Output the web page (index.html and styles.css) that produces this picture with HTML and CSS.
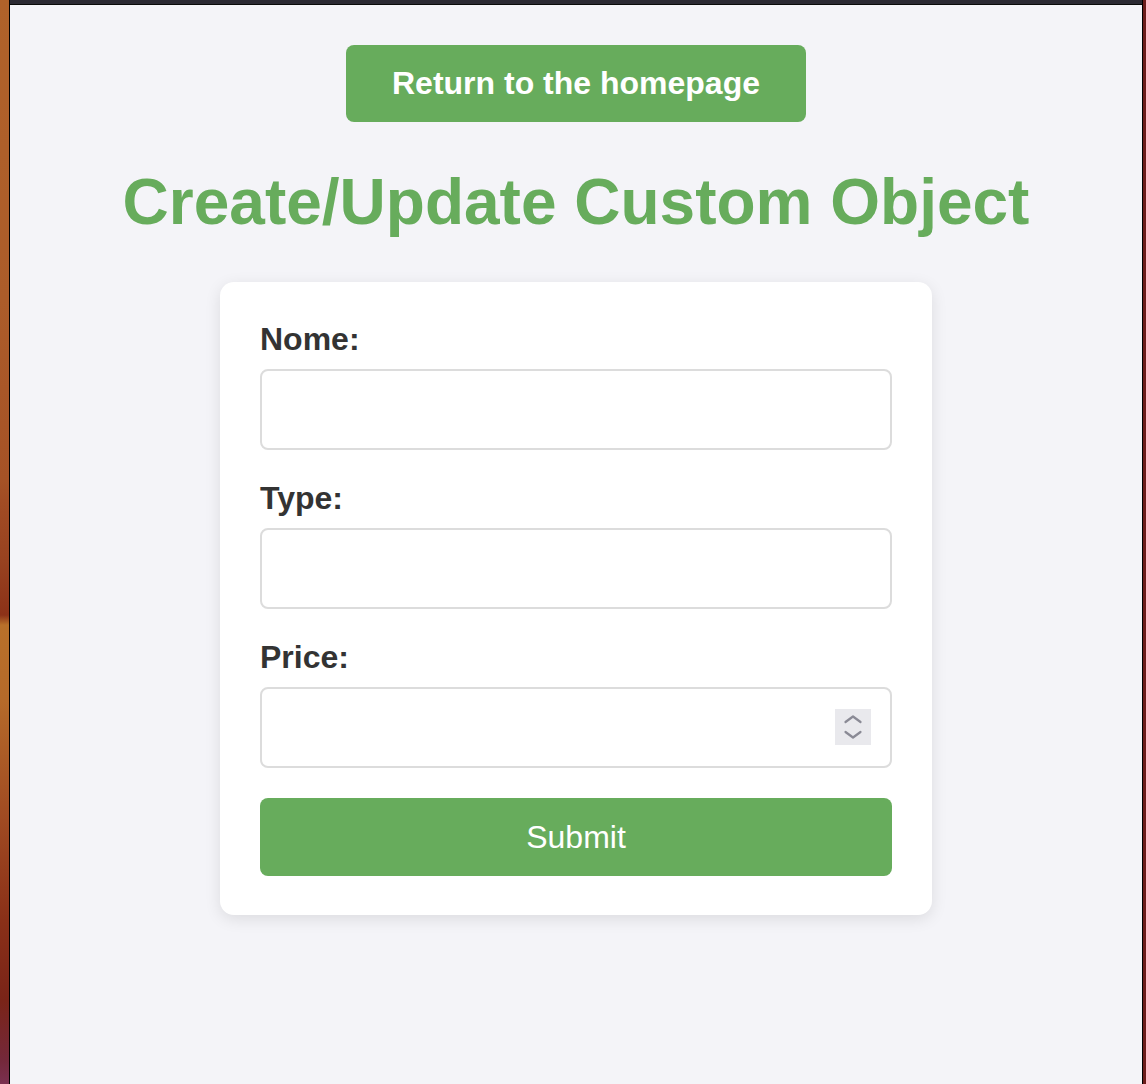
FILE: index.html
```html
<!DOCTYPE html>
<html lang="en">
<head>
<meta charset="utf-8">
<title>Create/Update Custom Object</title>
<link rel="stylesheet" href="styles.css">
</head>
<body>
<div class="desk-left"></div>
<div class="window">
  <div class="titlebar"></div>
  <main class="page">
    <a class="home-btn" href="#">Return to the homepage</a>
    <h1 class="title">Create/Update Custom Object</h1>
    <form class="card">
      <div class="field">
        <label class="label" for="nome">Nome:</label>
        <input class="input" id="nome" type="text">
      </div>
      <div class="field">
        <label class="label" for="type">Type:</label>
        <input class="input" id="type" type="text">
      </div>
      <div class="field">
        <label class="label" for="price">Price:</label>
        <div class="input-wrap">
          <input class="input" id="price" type="text" inputmode="decimal">
          <span class="spinner" aria-hidden="true">
            <svg width="36" height="36" viewBox="0 0 36 36">
              <path d="M10.5 13 L18 7.5 L25.5 13" fill="none" stroke="#8a8a95" stroke-width="2.2" stroke-linecap="round" stroke-linejoin="round"/>
              <path d="M10.5 23 L18 28.5 L25.5 23" fill="none" stroke="#8a8a95" stroke-width="2.2" stroke-linecap="round" stroke-linejoin="round"/>
            </svg>
          </span>
        </div>
      </div>
      <button class="submit" type="button">Submit</button>
    </form>
  </main>
</div>
<div class="desk-right"></div>
</body>
</html>
```
FILE: styles.css
```css
html, body {
  margin: 0;
  padding: 0;
  height: 100%;
}
body {
  display: flex;
  height: 1084px;
  overflow: hidden;
  font-family: "Liberation Sans", Arial, sans-serif;
  background: #6a1a18;
}
.desk-left {
  width: 9px;
  flex: none;
  background: linear-gradient(to bottom,
    #b0622a 0px,
    #ac5c2a 300px,
    #a65226 480px,
    #a24c24 500px,
    #984220 560px,
    #8c3218 615px,
    #b8702a 625px,
    #b56a2a 700px,
    #a04a22 820px,
    #8a3018 920px,
    #7a2418 1000px,
    #74283a 1060px,
    #7a3050 1084px);
}
.desk-right {
  width: 3px;
  flex: none;
  background: #6c1c1a;
}
.window {
  flex: 1;
  display: flex;
  flex-direction: column;
  border-left: 1px solid #000;
  border-right: 1px solid #000;
  background: #f4f4f8;
}
.titlebar {
  height: 4px;
  background: #2b2a33;
  border-bottom: 1px solid #0a0a0a;
  flex: none;
}
.page {
  flex: 1;
  display: flex;
  flex-direction: column;
  align-items: center;
  padding-top: 40px;
  background: #f4f4f8;
}
.home-btn {
  display: flex;
  align-items: center;
  justify-content: center;
  width: 460px;
  height: 77px;
  box-sizing: border-box;
  background: #67ac5c;
  color: #fff;
  text-decoration: none;
  font-weight: bold;
  font-size: 32px;
  border-radius: 8px;
}
.title {
  margin: 43px 0 43px;
  font-size: 64px;
  line-height: 74px;
  font-weight: bold;
  color: #67ac5c;
  text-align: center;
}
.card {
  width: 712px;
  box-sizing: border-box;
  padding: 39px 40px 39px;
  background: #fff;
  border-radius: 14px;
  box-shadow: 0 4px 16px rgba(0, 0, 0, 0.10);
  display: flex;
  flex-direction: column;
}
.field {
  display: flex;
  flex-direction: column;
  margin-bottom: 30px;
}
.label {
  font-size: 32px;
  line-height: 37px;
  font-weight: bold;
  color: #333;
  margin-bottom: 11px;
}
.input-wrap {
  position: relative;
}
.input {
  display: block;
  width: 100%;
  height: 81px;
  box-sizing: border-box;
  border: 2px solid #dcdcdc;
  border-radius: 8px;
  background: #fff;
  font-family: inherit;
  font-size: 28px;
  padding: 0 16px;
  outline: none;
}
.spinner {
  position: absolute;
  top: 22px;
  right: 21px;
  width: 36px;
  height: 36px;
  background: #e9e9ed;
  display: block;
}
.spinner svg {
  display: block;
}
.submit {
  height: 78px;
  width: 100%;
  border: none;
  border-radius: 8px;
  background: #67ac5c;
  color: #fff;
  font-family: "Liberation Sans", Arial, sans-serif;
  font-size: 32px;
  font-weight: normal;
  padding: 0;
  cursor: pointer;
}
```
